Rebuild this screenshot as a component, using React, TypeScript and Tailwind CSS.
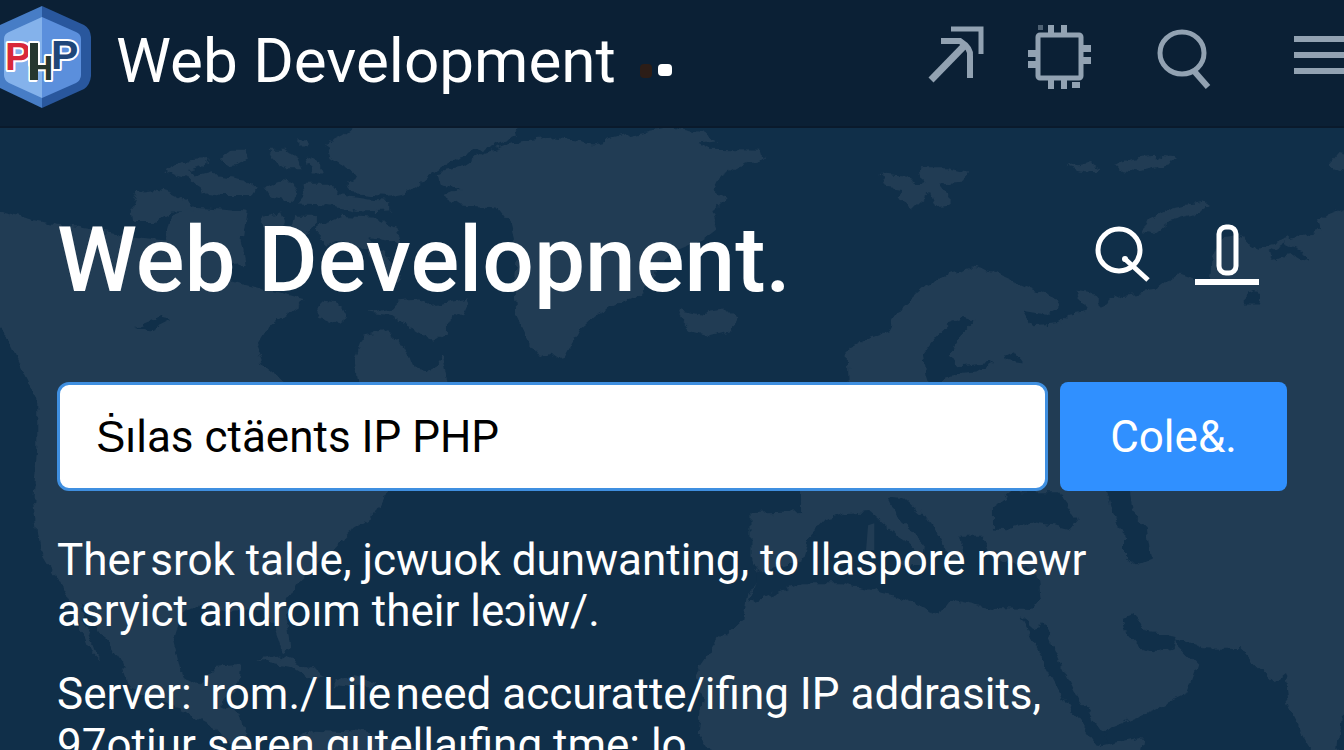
import { useState, type FormEvent, type ReactNode } from 'react'

const paragraphs = [
  ['Ther\u200asrok talde, jcwuok dunwanting, to llaspore mewr', 'asryict androım their leɔiw/.'],
  ["Server: 'rom./\u200aLile\u200aneed accuratte/ifing IP addrasits,", '97otiur seren gutellaıfing tme: lo'],
]

function PhpLogo() {
  return (
    <svg viewBox="-8 0 100 104" className="-ml-2 h-[104px] w-[100px] shrink-0" role="img" aria-label="PHP">
      <path d="M42 1 L0 20 Q-7 24 -7 31 V71 Q-7 79 0 83 L42 103 Z" fill="#477dc6" />
      <path d="M42 1 L84 20 Q90 23 91 32 V71 Q90 80 84 84 L42 103 Z" fill="#29579d" />
      <path d="M42 12 L9 27 Q4 29 4 34 V70 Q4 75 9 78 L42 93 Z" fill="#84b2eb" />
      <path d="M42 12 L76 27 Q81 29 81 34 V70 Q81 75 76 78 L42 93 Z" fill="#5b8fdc" />
      <g
        fontFamily="'Liberation Sans', sans-serif"
        fontWeight="bold"
        stroke="#ffffff"
        strokeWidth="4"
        strokeLinejoin="round"
        paintOrder="stroke"
      >
        <text x="5" y="65" fontSize="39" fill="#d8283a">P</text>
        <text x="51" y="64" fontSize="41" fill="#1f4679">P</text>
        <path d="M30 38 H38 V60 H30 Z" fill="#26372f" />
        <text x="28" y="75" fontSize="35" fill="#26372f">H</text>
        <path d="M30 38 H38 V75 H30 Z" fill="#26372f" stroke="none" />
      </g>
    </svg>
  )
}

function ArrowIcon() {
  return (
    <svg viewBox="928 24 56 64" className="h-16 w-14" fill="none" stroke="currentColor" strokeWidth="5">
      <path d="M951 28 H981 V53" />
      <path d="M931 79 L966 43" strokeWidth="7" />
      <path d="M941 40 H960 Q971 47 970 55 V77" strokeWidth="6" />
    </svg>
  )
}

function ChipIcon() {
  return (
    <svg viewBox="1027 24 64 64" className="size-16" fill="currentColor">
      <rect x="1037" y="34" width="43" height="43" rx="2" fill="none" stroke="currentColor" strokeWidth="5" />
      <path d="M1047 24h6v9h-6zM1060 24h6v9h-6zM1047 79h6v9h-6zM1060 79h6v9h-6zM1071 81h8v6h-8z" />
      <path d="M1027 49h8v7h-8zM1027 60h8v7h-8zM1082 44h8v7h-8zM1082 56h8v7h-8z" />
      <rect x="1037" y="24" width="5" height="5" opacity="0.5" />
    </svg>
  )
}

function SearchIcon() {
  return (
    <svg viewBox="1156 24 56 64" className="h-16 w-14" fill="none" stroke="currentColor" strokeWidth="5">
      <ellipse cx="1182" cy="52" rx="22" ry="21" />
      <path d="M1194 70 L1208 86" strokeWidth="6" />
    </svg>
  )
}

function MenuIcon() {
  return (
    <svg viewBox="0 0 64 64" className="h-16 w-16" stroke="currentColor" strokeWidth="6">
      <path d="M0 14H64M0 30H64M0 46H64" />
    </svg>
  )
}

function HeroSearchIcon() {
  return (
    <svg viewBox="1094 224 56 64" className="h-16 w-14" fill="none" stroke="currentColor" strokeWidth="5">
      <ellipse cx="1118" cy="250" rx="21" ry="21" />
      <path d="M1124 259 L1147 280" />
      <circle cx="1124" cy="259" r="3" fill="currentColor" stroke="none" />
    </svg>
  )
}

function MicIcon() {
  return (
    <svg viewBox="1195 224 64 64" className="size-16" fill="none" stroke="currentColor" strokeWidth="5">
      <rect x="1219" y="227" width="17" height="46" rx="7" />
      <path d="M1195 282 H1259" strokeWidth="6" />
    </svg>
  )
}

function WorldMap() {
  return (
    <svg
      viewBox="0 127 1344 623"
      preserveAspectRatio="xMidYMin slice"
      className="pointer-events-none absolute inset-0 h-full w-full"
      aria-hidden="true"
    >
      <filter id="coast" x="-5%" y="-5%" width="110%" height="110%" colorInterpolationFilters="sRGB">
        <feTurbulence type="fractalNoise" baseFrequency="0.09" numOctaves="3" seed="4" />
        <feDisplacementMap in="SourceGraphic" scale="10" xChannelSelector="R" yChannelSelector="G" />
      </filter>
      <g transform="translate(-3 -4)">
        <g filter="url(#coast)" fill="#213c54">
          {/* North and Central America */}
          <path d="M-20 203 L0 207 36 215 60 221 100 228 150 236 184 240 190 216 212 208 262 212 258 240 262 262 240 266 250 280 320 298 300 313 282 325 272 342 280 362 300 378 330 400 350 440 365 410 372 382 368 355 376 332 398 328 412 338 420 352 425 364 440 366 452 350 458 380 480 420 470 440 420 470 395 488 385 508 362 522 345 540 312 572 300 592 306 635 298 640 288 608 276 596 240 600 215 592 200 602 192 628 200 662 216 672 232 654 258 652 254 674 236 690 258 700 262 722 284 752 268 752 240 718 196 694 150 674 142 650 120 618 102 588 106 610 120 646 112 638 94 594 76 562 62 538 56 494 60 440 60 394 48 370 34 340 18 324 0 314 -20 310 Z" />
          {/* Arctic islands */}
          <path d="M152 207 L158 192 172 190 190 194 206 202 212 212 190 212 174 222 154 222 Z" />
          <path d="M183 172 L200 163 224 161 222 168 204 173 214 176 230 172 236 178 262 182 272 190 268 196 240 196 224 194 212 186 206 180 190 176 Z" />
          <path d="M236 162 L248 152 262 152 264 160 254 166 242 168 ZM284 152 L300 152 312 160 316 170 302 170 290 162 ZM320 158 L334 166 338 174 324 174 ZM312 142h10v8h-10z" />
          <path d="M280 188 L294 182 308 184 314 196 304 203 286 198 ZM318 186 L344 186 352 196 380 200 402 202 402 211 374 212 340 206 312 205 320 196 Z" />
          <path d="M366 130 L380 120 520 120 526 138 500 150 470 158 444 174 422 192 398 197 362 194 358 184 372 178 344 160 340 146 356 138 Z" />
          <path d="M278 216 L296 212 300 222 290 230 276 226 ZM308 214 L330 214 330 228 318 236 306 228 Z" />
          <path d="M334 224 L356 216 388 218 408 228 414 246 398 238 380 236 400 258 414 280 404 280 380 252 352 240 340 246 332 238 Z" />
          <path d="M338 298 L348 300 362 314 352 322 330 314 Z" />
          <path d="M380 310 L404 305 410 298 430 296 440 304 458 300 478 296 472 310 456 318 456 330 446 338 426 326 412 320 400 312 Z" />
          {/* Caribbean */}
          <path d="M274 646 L294 642 312 648 334 660 340 664 320 662 304 652 ZM348 664 L366 662 388 668 380 674 348 672 Z" />
          <path d="M300 728 L330 714 372 716 420 730 460 752 460 770 286 770 Z" />
          {/* Greenland and Iceland */}
          <path d="M446 176 L472 170 490 156 526 144 560 140 600 146 640 136 672 130 704 136 720 144 700 146 712 152 762 153 764 160 740 168 722 178 716 190 728 200 714 212 720 228 704 240 680 250 660 270 648 290 604 310 586 326 570 356 560 348 548 354 536 338 524 312 522 280 526 256 518 224 506 208 470 206 454 196 470 190 448 186 Z" />
          <path d="M681 308 L704 313 712 306 726 304 738 316 732 328 712 333 694 328 684 318 Z" />
          {/* Svalbard and Franz Josef Land */}
          <path d="M877 176 L900 178 914 186 918 180 916 170 944 170 962 174 956 184 934 186 944 198 944 206 932 208 926 194 916 202 908 210 896 202 898 190 882 188 Z" />
          <path d="M1058 168 L1080 164 1090 170 1086 174 1070 172 ZM1104 166 L1122 160 1140 158 1162 160 1164 164 1144 170 1128 174 1110 172 ZM1312 166 L1322 154 1360 164 1360 178 1324 172 Z" />
          <path d="M1130 232 L1136 220 1160 208 1190 202 1196 206 1180 216 1156 222 1142 234 Z" />
          {/* Europe, Asia and Africa */}
          <path d="M844 346 L862 336 884 328 894 308 920 284 944 272 966 266 990 272 1022 286 1050 298 1052 304 1038 312 1014 308 1024 322 1050 320 1060 311 1076 308 1068 288 1080 290 1090 302 1110 292 1148 286 1166 272 1196 282 1198 256 1206 238 1222 236 1244 248 1272 238 1304 230 1300 220 1340 204 1370 196 1370 680 1344 686 1324 702 1320 740 1304 748 1288 722 1272 690 1268 660 1258 668 1240 650 1228 636 1190 635 1162 626 1164 632 1184 652 1174 680 1140 696 1090 716 1092 730 1132 720 1124 770 740 770 724 752 700 716 704 684 698 658 720 626 744 606 748 584 760 566 752 546 752 504 800 502 800 440 846 400 Z" />
        </g>
        <g filter="url(#coast)" fill="#102f49">
          {/* Inland seas */}
          <path d="M922 372 L918 350 930 334 944 320 958 315 968 318 952 334 944 350 952 362 986 358 970 368 942 370 928 392 Z" />
          <path d="M748 592 L760 562 800 550 806 530 824 510 846 504 866 502 886 520 902 532 910 540 900 552 918 556 920 534 896 512 884 488 900 490 920 508 936 532 948 552 958 546 954 526 976 526 984 546 1030 562 1032 586 1024 598 990 597 946 588 936 602 914 594 890 584 840 572 800 572 760 588 Z" />
          <path d="M986 520 L986 498 1006 484 1050 484 1068 510 1060 520 1044 516 1024 513 1002 521 Z" />
          <path d="M1096 480 L1118 480 1122 504 1136 518 1140 548 1126 554 1114 548 1114 526 1104 508 Z" />
          <path d="M1112 606 L1122 602 1136 620 1164 624 1160 634 1142 640 1132 638 1116 620 Z" />
          {/* Red Sea */}
          <path d="M1012 604 L1028 618 1034 609 1052 652 1064 676 1080 700 1090 716 1098 728 1084 726 1058 690 1042 660 1030 638 Z" />
          <path d="M1230 292 L1238 288 1246 290 1244 302 1230 302 ZM998 350 L1006 346 1014 358 1000 356 Z" />
          <path d="M1252 252 L1268 242 1286 250 1292 262 1280 254 1260 258 ZM154 324 L180 314 190 316 170 326 Z" />
        </g>
        <path d="M865 516 L871 514 871 540 863 540 ZM891 550 L909 550 905 558 Z" fill="#213c54" />
      </g>
    </svg>
  )
}

function IconButton({ label, className, children }: { label: string; className?: string; children: ReactNode }) {
  return (
    <button type="button" aria-label={label} className={className}>
      {children}
    </button>
  )
}

export default function App() {
  const [query, setQuery] = useState('Ṡılas ctäents IP PHP')

  const handleSubmit = (event: FormEvent) => {
    event.preventDefault()
  }

  return (
    <div className="flex h-screen flex-col overflow-hidden bg-[#102f49] font-['Roboto',sans-serif] text-white">
      <header className="flex h-32 shrink-0 items-center overflow-hidden border-b-2 border-[#0a1a2c] bg-[#0b2035] pb-3">
        <PhpLogo />
        <div className="mt-2 ml-6 flex flex-1 items-center gap-6">
          <span className="text-[62px] leading-16 whitespace-nowrap">Web Development</span>
          <span className="mt-5 flex gap-1.5">
            <span className="h-3.5 w-3 rounded-sm bg-[#2c1d17]" />
            <span className="h-3 w-3.5 rounded-sm bg-white" />
          </span>
        </div>
        <nav className="-mr-3.5 flex shrink-0 items-center gap-11 text-[#92a2b2]">
          <IconButton label="Open">
            <ArrowIcon />
          </IconButton>
          <IconButton label="Hardware">
            <ChipIcon />
          </IconButton>
          <IconButton label="Search" className="px-5">
            <SearchIcon />
          </IconButton>
          <IconButton label="Menu" className="pl-[18px]">
            <MenuIcon />
          </IconButton>
        </nav>
      </header>

      <main className="relative flex-1">
        <WorldMap />
        <div className="relative px-[57px] pt-20">
          <div className="flex items-center justify-between pr-7">
            <h1 className="text-[91px] leading-[104px] font-medium whitespace-nowrap">Web Developnent.</h1>
            <div className="mb-2 flex gap-11">
              <IconButton label="Search the site">
                <HeroSearchIcon />
              </IconButton>
              <IconButton label="Voice search">
                <MicIcon />
              </IconButton>
            </div>
          </div>

          <form onSubmit={handleSubmit} className="mt-[70px] flex gap-3">
            <input
              type="text"
              aria-label="Search"
              value={query}
              onChange={(event) => setQuery(event.target.value)}
              className="h-[109px] min-w-0 flex-1 rounded-xl border-3 border-[#3f8fe0] bg-white px-9 text-[44px] text-black outline-none"
            />
            <button type="submit" className="h-[109px] w-[227px] rounded-lg bg-[#3090ff] text-[44px]">
              Cole&amp;.
            </button>
          </form>

          <div className="mt-11 space-y-8 text-[44px] leading-[51px]">
            {paragraphs.map((lines) => (
              <p key={lines[0]}>
                {lines.map((line) => (
                  <span key={line} className="block whitespace-nowrap">
                    {line}
                  </span>
                ))}
              </p>
            ))}
          </div>
        </div>
      </main>
    </div>
  )
}
